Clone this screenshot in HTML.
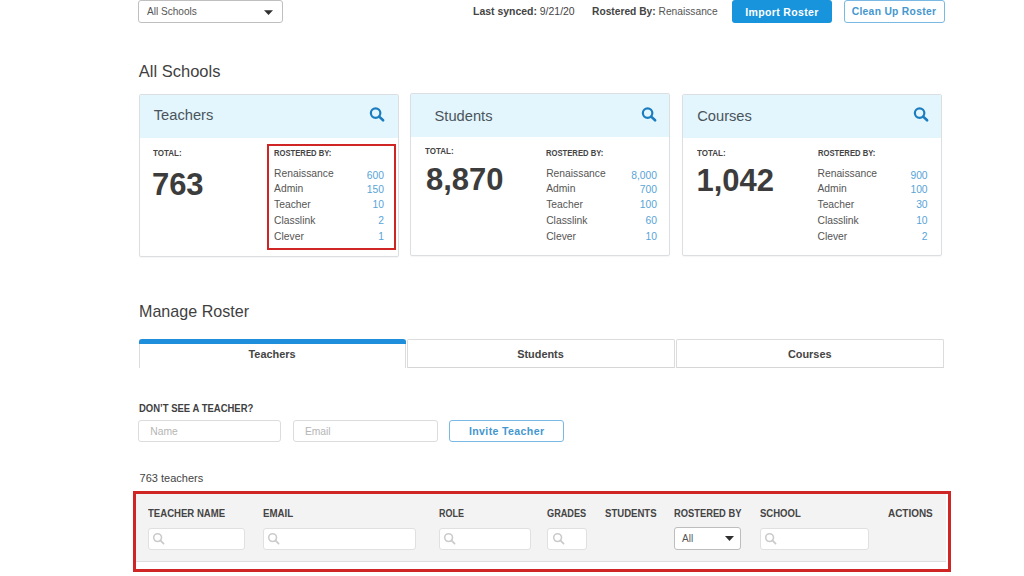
<!DOCTYPE html>
<html><head><meta charset="utf-8">
<style>
html,body{margin:0;padding:0;width:1024px;height:576px;overflow:hidden;background:#fff;}
body{position:relative;font-family:"Liberation Sans",sans-serif;color:#444;}
.a{position:absolute;white-space:nowrap;}
.b{font-weight:bold;}
.box{position:absolute;box-sizing:border-box;}
.card{position:absolute;box-sizing:border-box;border:1px solid #dcdfe1;border-radius:2px;background:#fff;overflow:hidden;box-shadow:0 1px 1px rgba(0,0,0,0.04);}
.card .hd{position:absolute;left:0;top:0;right:0;height:43px;background:#e3f5fd;}
.inp{position:absolute;box-sizing:border-box;border:1px solid #dcdcdc;border-radius:3px;background:#fff;}
.tab{position:absolute;box-sizing:border-box;border:1px solid #dcdcdc;border-bottom:1px solid #d6d6d6;border-radius:2px 2px 0 0;background:#fff;top:339px;height:29px;}
.th{font-size:10.2px;line-height:10.2px;font-weight:bold;color:#444;top:508.6px;transform-origin:0 0;}
.row{font-size:10.3px;line-height:10.3px;color:#555;}
.num{font-size:10.3px;line-height:10.3px;color:#58a4d8;text-align:right;}
</style></head>
<body>
<!-- top bar -->
<div class="box" style="left:138px;top:0;width:145px;height:23px;border:1px solid #bfbfbf;border-radius:3px;"></div>
<div class="a" style="left:147px;top:6.4px;font-size:10.5px;line-height:10.5px;color:#555;transform:scaleX(0.96);transform-origin:0 0;">All Schools</div>
<svg class="a" style="left:263px;top:9px" width="11" height="7" viewBox="0 0 11 7"><path d="M1 1.2 L10 1.2 L5.5 6 Z" fill="#2f2f2f"/></svg>

<div class="a" style="left:472.7px;top:5.9px;font-size:11px;line-height:11px;color:#444;transform:scaleX(0.95);transform-origin:0 0;"><span class="b">Last synced:</span> 9/21/20</div>
<div class="a" style="left:591.5px;top:5.9px;font-size:11px;line-height:11px;color:#444;transform:scaleX(0.93);transform-origin:0 0;"><span class="b">Rostered By:</span> <span style="color:#555">Renaissance</span></div>

<div class="box" style="left:731.7px;top:0;width:100.3px;height:23px;background:#1894dc;border-radius:3px;"></div>
<div class="a b" style="left:745.3px;top:6.9px;font-size:10.5px;line-height:10.5px;color:#fff;letter-spacing:0.35px;">Import Roster</div>
<div class="box" style="left:843.5px;top:0;width:101px;height:23px;border:1px solid #7ab9e3;border-radius:3px;"></div>
<div class="a b" style="left:851.7px;top:7.2px;font-size:10.3px;line-height:10.3px;color:#4597cf;letter-spacing:0.3px;">Clean Up Roster</div>

<!-- All Schools -->
<div class="a" style="left:138.8px;top:63.3px;font-size:16.5px;line-height:16.5px;color:#3f3f3f;">All Schools</div>

<!-- Teachers card -->
<div class="card" style="left:138.5px;top:93.5px;width:260px;height:163px;"><div class="hd"></div></div>
<div class="a" style="left:153.75px;top:107.8px;font-size:14.7px;line-height:14.7px;color:#4a545b;">Teachers</div>
<div class="a b" style="left:153px;top:148.9px;font-size:8.8px;line-height:8.8px;color:#444;transform:scaleX(0.91);transform-origin:0 0;">TOTAL:</div>
<div class="a b" style="left:151.9px;top:168.8px;font-size:31px;line-height:31px;color:#3c3c3c;">763</div>
<div class="a b" style="left:274.2px;top:149.3px;font-size:8.5px;line-height:8.5px;color:#444;transform:scaleX(0.9);transform-origin:0 0;">ROSTERED BY:</div>

<!-- Students card -->
<div class="card" style="left:410.2px;top:92.8px;width:260.2px;height:163.4px;"><div class="hd"></div></div>
<div class="a" style="left:434.5px;top:109px;font-size:14.7px;line-height:14.7px;color:#4a545b;">Students</div>
<div class="a b" style="left:425.4px;top:147.4px;font-size:8.8px;line-height:8.8px;color:#444;transform:scaleX(0.91);transform-origin:0 0;">TOTAL:</div>
<div class="a b" style="left:426px;top:163.6px;font-size:31px;line-height:31px;color:#3c3c3c;">8,870</div>
<div class="a b" style="left:546.2px;top:149.3px;font-size:8.5px;line-height:8.5px;color:#444;transform:scaleX(0.9);transform-origin:0 0;">ROSTERED BY:</div>

<!-- Courses card -->
<div class="card" style="left:682.2px;top:93.7px;width:259.4px;height:162.5px;"><div class="hd"></div></div>
<div class="a" style="left:697.2px;top:109px;font-size:14.7px;line-height:14.7px;color:#4a545b;">Courses</div>
<div class="a b" style="left:696.8px;top:148.8px;font-size:8.8px;line-height:8.8px;color:#444;transform:scaleX(0.91);transform-origin:0 0;">TOTAL:</div>
<div class="a b" style="left:696.4px;top:165.2px;font-size:31px;line-height:31px;color:#3c3c3c;">1,042</div>
<div class="a b" style="left:817.5px;top:149.3px;font-size:8.5px;line-height:8.5px;color:#444;transform:scaleX(0.9);transform-origin:0 0;">ROSTERED BY:</div>

<div class="a row" style="left:274.1px;top:168.88px;">Renaissance</div>
<div class="a num" style="left:324px;width:60px;top:170.88px;">600</div>
<div class="a row" style="left:274.1px;top:184.28px;">Admin</div>
<div class="a num" style="left:324px;width:60px;top:184.58px;">150</div>
<div class="a row" style="left:274.1px;top:200.08px;">Teacher</div>
<div class="a num" style="left:324px;width:60px;top:200.38px;">10</div>
<div class="a row" style="left:274.1px;top:215.78px;">Classlink</div>
<div class="a num" style="left:324px;width:60px;top:216.08px;">2</div>
<div class="a row" style="left:274.1px;top:231.58px;">Clever</div>
<div class="a num" style="left:324px;width:60px;top:231.88px;">1</div>
<div class="a row" style="left:546.2px;top:168.88px;">Renaissance</div>
<div class="a num" style="left:597px;width:60px;top:170.88px;">8,000</div>
<div class="a row" style="left:546.2px;top:184.28px;">Admin</div>
<div class="a num" style="left:597px;width:60px;top:184.58px;">700</div>
<div class="a row" style="left:546.2px;top:200.08px;">Teacher</div>
<div class="a num" style="left:597px;width:60px;top:200.38px;">100</div>
<div class="a row" style="left:546.2px;top:215.78px;">Classlink</div>
<div class="a num" style="left:597px;width:60px;top:216.08px;">60</div>
<div class="a row" style="left:546.2px;top:231.58px;">Clever</div>
<div class="a num" style="left:597px;width:60px;top:231.88px;">10</div>
<div class="a row" style="left:817.5px;top:168.88px;">Renaissance</div>
<div class="a num" style="left:867.6px;width:60px;top:170.88px;">900</div>
<div class="a row" style="left:817.5px;top:184.28px;">Admin</div>
<div class="a num" style="left:867.6px;width:60px;top:184.58px;">100</div>
<div class="a row" style="left:817.5px;top:200.08px;">Teacher</div>
<div class="a num" style="left:867.6px;width:60px;top:200.38px;">30</div>
<div class="a row" style="left:817.5px;top:215.78px;">Classlink</div>
<div class="a num" style="left:867.6px;width:60px;top:216.08px;">10</div>
<div class="a row" style="left:817.5px;top:231.58px;">Clever</div>
<div class="a num" style="left:867.6px;width:60px;top:231.88px;">2</div>

<!-- red box 1 -->
<div class="box" style="left:267.4px;top:143.5px;width:128.5px;height:106.6px;border:2.4px solid #d02525;"></div>

<!-- search icons -->
<svg class="a" style="left:368px;top:106px" width="18" height="17" viewBox="0 0 18 17"><circle cx="7.6" cy="7.1" r="4.75" fill="none" stroke="#1b7dc0" stroke-width="2.2"/><path d="M11.2 10.6 L15.1 14.3" stroke="#1b7dc0" stroke-width="2.6" stroke-linecap="round"/></svg>
<svg class="a" style="left:640px;top:106px" width="18" height="17" viewBox="0 0 18 17"><circle cx="7.6" cy="7.1" r="4.75" fill="none" stroke="#1b7dc0" stroke-width="2.2"/><path d="M11.2 10.6 L15.1 14.3" stroke="#1b7dc0" stroke-width="2.6" stroke-linecap="round"/></svg>
<svg class="a" style="left:912px;top:106px" width="18" height="17" viewBox="0 0 18 17"><circle cx="7.6" cy="7.1" r="4.75" fill="none" stroke="#1b7dc0" stroke-width="2.2"/><path d="M11.2 10.6 L15.1 14.3" stroke="#1b7dc0" stroke-width="2.6" stroke-linecap="round"/></svg>

<!-- Manage Roster -->
<div class="a" style="left:139px;top:303.3px;font-size:16.1px;line-height:16.1px;color:#3f3f3f;">Manage Roster</div>

<div class="tab" style="left:138.5px;width:267px;border-top:none;border-bottom:none;"></div>
<div class="box" style="left:138.5px;top:339.3px;width:267px;height:4.5px;background:#1f8edb;border-radius:3px 3px 0 0;"></div>
<div class="tab" style="left:406.5px;width:268px;"></div>
<div class="tab" style="left:676px;width:267.5px;"></div>
<div class="a b" style="left:138.5px;width:267px;text-align:center;top:349.4px;font-size:10.9px;line-height:10.9px;color:#444;">Teachers</div>
<div class="a b" style="left:406.5px;width:268px;text-align:center;top:349.4px;font-size:10.9px;line-height:10.9px;color:#444;">Students</div>
<div class="a b" style="left:676px;width:267.5px;text-align:center;top:349.4px;font-size:10.9px;line-height:10.9px;color:#444;">Courses</div>

<!-- Don't see -->
<div class="a b" style="left:138.6px;top:402.8px;font-size:10.8px;line-height:10.8px;color:#3f3f3f;transform:scaleX(0.88);transform-origin:0 0;">DON’T SEE A TEACHER?</div>
<div class="inp" style="left:138.3px;top:420px;width:143.2px;height:22.3px;"></div>
<div class="a" style="left:150.3px;top:427px;font-size:10.3px;line-height:10.3px;color:#b5b5b5;">Name</div>
<div class="inp" style="left:293.2px;top:420px;width:144.4px;height:22.3px;"></div>
<div class="a" style="left:304.9px;top:427px;font-size:10.3px;line-height:10.3px;color:#b5b5b5;">Email</div>
<div class="box" style="left:449px;top:419.7px;width:114.6px;height:22.5px;border:1px solid #7ab9e3;border-radius:3px;"></div>
<div class="a b" style="left:469px;top:425.9px;font-size:10.6px;line-height:10.6px;color:#4597cf;letter-spacing:0.35px;">Invite Teacher</div>

<div class="a" style="left:139.6px;top:472.7px;font-size:11px;line-height:11px;color:#444;">763 teachers</div>

<!-- table header -->
<div class="box" style="left:136px;top:493.7px;width:810px;height:68px;background:#f3f3f3;border-bottom:1px solid #dedede;"></div>
<div class="box" style="left:133px;top:490.8px;width:818.3px;height:80.9px;border:3px solid #d02525;"></div>

<div class="a th" style="left:147.7px;transform:scaleX(0.94);">TEACHER NAME</div>
<div class="a th" style="left:262.6px;transform:scaleX(0.95);">EMAIL</div>
<div class="a th" style="left:438.7px;transform:scaleX(0.88);">ROLE</div>
<div class="a th" style="left:547.3px;transform:scaleX(0.9);">GRADES</div>
<div class="a th" style="left:604.5px;transform:scaleX(0.94);">STUDENTS</div>
<div class="a th" style="left:674.2px;transform:scaleX(0.916);">ROSTERED BY</div>
<div class="a th" style="left:759.8px;transform:scaleX(0.935);">SCHOOL</div>
<div class="a th" style="left:888.4px;transform:scaleX(0.976);">ACTIONS</div>

<div class="inp" style="left:147.7px;top:527.5px;width:97.0px;height:22px;border-color:#e0e0e0;"></div>
<svg class="a" style="left:152.2px;top:532px" width="14" height="14" viewBox="0 0 14 14"><circle cx="5.6" cy="5.6" r="3.9" fill="none" stroke="#cbcbcb" stroke-width="1.6"/><path d="M8.4 8.4 L11.6 11.6" stroke="#cbcbcb" stroke-width="1.8" stroke-linecap="round"/></svg>
<div class="inp" style="left:262.6px;top:527.5px;width:153.8px;height:22px;border-color:#e0e0e0;"></div>
<svg class="a" style="left:267.1px;top:532px" width="14" height="14" viewBox="0 0 14 14"><circle cx="5.6" cy="5.6" r="3.9" fill="none" stroke="#cbcbcb" stroke-width="1.6"/><path d="M8.4 8.4 L11.6 11.6" stroke="#cbcbcb" stroke-width="1.8" stroke-linecap="round"/></svg>
<div class="inp" style="left:438.7px;top:527.5px;width:92.6px;height:22px;border-color:#e0e0e0;"></div>
<svg class="a" style="left:443.2px;top:532px" width="14" height="14" viewBox="0 0 14 14"><circle cx="5.6" cy="5.6" r="3.9" fill="none" stroke="#cbcbcb" stroke-width="1.6"/><path d="M8.4 8.4 L11.6 11.6" stroke="#cbcbcb" stroke-width="1.8" stroke-linecap="round"/></svg>
<div class="inp" style="left:547.3px;top:527.5px;width:39.3px;height:22px;border-color:#e0e0e0;"></div>
<svg class="a" style="left:551.8px;top:532px" width="14" height="14" viewBox="0 0 14 14"><circle cx="5.6" cy="5.6" r="3.9" fill="none" stroke="#cbcbcb" stroke-width="1.6"/><path d="M8.4 8.4 L11.6 11.6" stroke="#cbcbcb" stroke-width="1.8" stroke-linecap="round"/></svg>
<div class="inp" style="left:759.8px;top:527.5px;width:109.5px;height:22px;border-color:#e0e0e0;"></div>
<svg class="a" style="left:764.3px;top:532px" width="14" height="14" viewBox="0 0 14 14"><circle cx="5.6" cy="5.6" r="3.9" fill="none" stroke="#cbcbcb" stroke-width="1.6"/><path d="M8.4 8.4 L11.6 11.6" stroke="#cbcbcb" stroke-width="1.8" stroke-linecap="round"/></svg>
<div class="inp" style="left:674.2px;top:526.8px;width:66.4px;height:23.1px;border-color:#bdbdbd;"></div>
<div class="a" style="left:682px;top:533.5px;font-size:10px;line-height:10px;color:#555;">All</div>
<svg class="a" style="left:723.5px;top:535px" width="11" height="7" viewBox="0 0 11 7"><path d="M1 1 L10 1 L5.5 6 Z" fill="#2f2f2f"/></svg>
</body></html>
